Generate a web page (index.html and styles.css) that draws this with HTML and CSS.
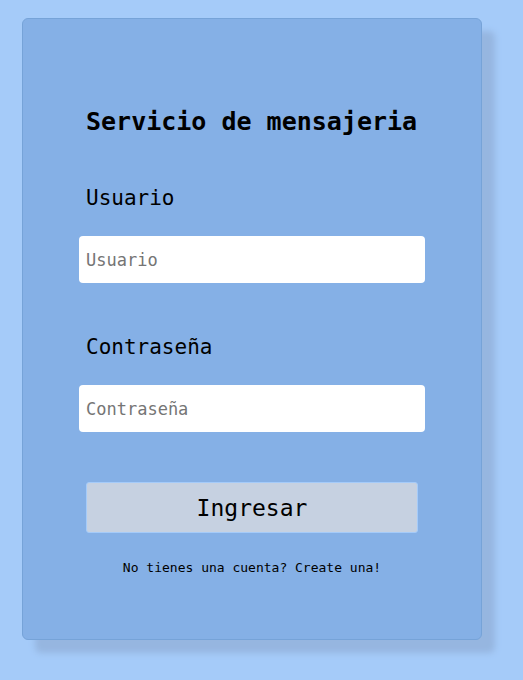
FILE: index.html
```html
<!DOCTYPE html>
<html lang="es">
<head>
<meta charset="utf-8">
<meta name="viewport" content="width=device-width, initial-scale=1">
<title>Servicio de mensajeria</title>
<link rel="stylesheet" href="styles.css">
</head>
<body>
<main class="card">
  <form class="login">
    <h1 class="title">Servicio de mensajeria</h1>
    <div class="field">
      <label class="label" for="user">Usuario</label>
      <input class="input" id="user" type="text" placeholder="Usuario">
    </div>
    <div class="field">
      <label class="label" for="password">Contraseña</label>
      <input class="input" id="password" type="password" placeholder="Contraseña">
    </div>
    <button class="submit" type="submit">Ingresar</button>
    <a class="signup" href="#">No tienes una cuenta? Create una!</a>
  </form>
</main>
</body>
</html>
```
FILE: styles.css
```css
* {
  box-sizing: border-box;
}

body {
  margin: 0;
  padding: 18px 41px 40px 22px;
  background: #a5cbf9;
  color: #000;
  font-family: Consolas, "DejaVu Sans Mono", monospace;
}

.card {
  padding: 85px 56px 61px;
  border: 1px solid #76a3d8;
  border-radius: 6px;
  background: #85b0e6;
  box-shadow: 13px 13px 6px #96b6e0;
}

.login {
  display: flex;
  flex-direction: column;
}

.title {
  margin: 0 7px 44px;
  font-size: 25px;
  line-height: 36px;
  white-space: nowrap;
}

.field {
  display: flex;
  flex-direction: column;
  gap: 24px;
  margin-bottom: 50px;
}

.label {
  margin-left: 7px;
  font-size: 21px;
  line-height: 28px;
}

.input {
  width: 100%;
  height: 47px;
  padding: 0 7px;
  border: 0;
  border-radius: 4px;
  background: #fff;
  font: 17px Consolas, "DejaVu Sans Mono", monospace;
}

.input::placeholder {
  color: #757575;
  opacity: 1;
}

.submit {
  height: 51px;
  margin: 0 7px 25px;
  border: 1px solid #a5cbf9;
  border-radius: 3px;
  background: #c6d1e1;
  color: #000;
  font: 23px Consolas, "DejaVu Sans Mono", monospace;
}

.signup {
  color: #000;
  font-size: 13px;
  line-height: 20px;
  text-align: center;
  text-decoration: none;
}
```
